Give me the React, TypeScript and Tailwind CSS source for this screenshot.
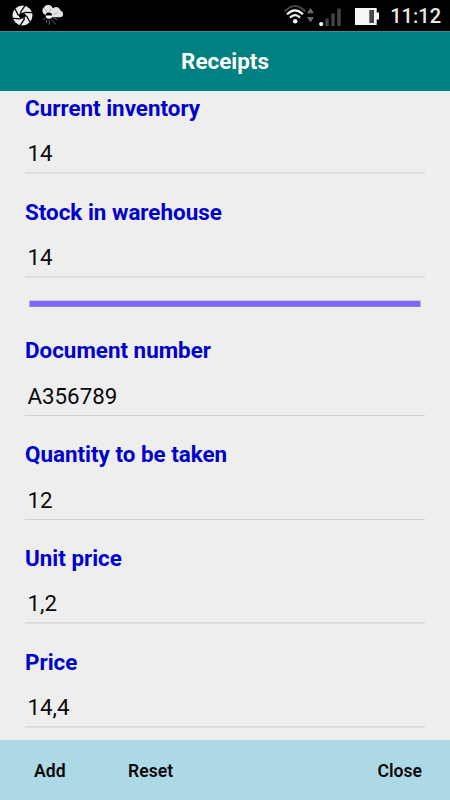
type FieldProps = { label: string; value: string; gap?: string; rule: string };

function Field({ label, value, gap = 'mt-[11px]', rule }: FieldProps) {
  return (
    <div className="flex h-[83px] shrink-0 flex-col">
      <div className="h-[34px] text-[22.4px] leading-[34px] font-bold whitespace-nowrap text-[#0000cd]">{label}</div>
      <div className={`h-[34px] pl-[2.500px] text-[22.3px] leading-[34px] whitespace-nowrap text-[#0a0a0a] ${gap}`}>{value}</div>
      <div className={`mt-auto shrink-0 ${rule}`} />
    </div>
  );
}

const soft = 'h-[2px] bg-[#e1e1e1] border-t border-[#d9d9d9]';
const crisp = 'h-px bg-[#d0d0d0]';

function Shutter() {
  return (
    <svg className="ml-3 h-[21px] w-[21px]" viewBox="0 0 21 21">
      <circle cx="10.5" cy="10.5" r="10" fill="#ececec" />
      <path d="M8.300 7.800l4-.2 2 3-1.900 2.900-3.900.2-2-3z" fill="#000" />
      <path d="M8.300 7.500L13.200 .3M12.500 7.300L20 7.700M14.500 10.700L18 17.200M12.700 13.700L8 20.700M8.500 13.900L1 13.400M6.500 10.600L3 3.700" stroke="#000" strokeWidth="1.300" />
    </svg>
  );
}

function Weather() {
  return (
    <svg className="ml-[9px] h-[22px] w-[22px]" viewBox="0 0 22 22">
      <path d="M3 10A4.700 4.700 0 0 1 2 2.200 4.900 4.900 0 0 1 10.800 3.200 4.800 4.800 0 0 1 18.600 5.800 3.300 3.300 0 0 1 18 12.300H10.500z" fill="#e4e4e4" />
      <path d="M3 4l2.500 3.500M8.600 3.500l-.6 3.500M16 7.500l-4.500 2" stroke="#999" strokeWidth=".7" />
      <circle cx="6.800" cy="10.700" r="3.300" fill="#000" />
      <path d="M3.700 10.500h6.600a3.300 3.300 0 0 1-6.600 0z" fill="#fff" />
      <path d="M3.300 13l-2 1.500M5 15l-1 3M7.300 15v4.800M9.300 14.500l4.500 5M10.800 12.800l5 2" stroke="#777" strokeWidth=".8" />
    </svg>
  );
}

function Signals() {
  return (
    <svg className="mr-[9px] ml-auto h-[26px] w-[97px] shrink-0" viewBox="284 3 97 26">
      <g fill="none" strokeWidth="2.200">
        <path d="M284.800 11.500Q295 .5 305.200 11.500" stroke="#444" />
        <path d="M287 14.300Q295 6.500 303 14.300" stroke="#f2f2f2" />
        <path d="M290 17.600Q295 12.800 300 17.600" stroke="#f2f2f2" />
      </g>
      <circle cx="295.200" cy="21.300" r="2.300" fill="#f2f2f2" />
      <path d="M307 13.300l3.500-5.300 3.500 5.300zM307 17l3.500 5.500 3.500-5.500z" fill="#6b6b6b" />
      <circle cx="321.200" cy="24.100" r="2.100" fill="#fff" />
      <path d="M325.300 18.500h3.400V26h-3.400zM331.300 13.500h3.400V26h-3.400zM337.300 8.500h3.400V26h-3.400z" fill="#454545" />
      <path d="M355 8h21.700v4.500h2.300v7h-2.300V25H355z" fill="#f6f6f6" />
      <path d="M369.300 10h4.700v13h-4.700z" fill="#484848" />
    </svg>
  );
}

export default function App() {
  return (
    <div className="flex h-[800px] w-[450px] flex-col overflow-hidden bg-[#eeeeee] font-[Roboto,sans-serif]">
      <div className="flex h-[31px] shrink-0 items-center bg-black">
        <Shutter />
        <Weather />
        <Signals />
        <div className="mr-[9px] w-[51px] pt-px text-right text-[20px] leading-[32px] font-medium whitespace-nowrap text-[#e8e8e8]">11:12</div>
      </div>
      <header className="flex h-[60px] shrink-0 items-center justify-center border-t border-[#3f8f8f] bg-[#008080] pt-px text-[22.4px] font-bold text-white">
        Receipts
      </header>
      <main className="flex min-h-0 flex-1 flex-col overflow-hidden px-[25px]">
        <Field label="Current inventory" value="14" rule={soft} />
        <div className="h-[21px] shrink-0" />
        <Field label="Stock in warehouse" value="14" rule={soft} />
        <div className="mt-[22px] ml-[4px] h-[7px] w-[392px] shrink-0 border border-t-[#cfc9ef] border-r-[#b9b0f0] border-b-[#8c7aee] border-l-[#b9b0f0] bg-[#7b68ee]" />
        <div className="h-[26px] shrink-0" />
        <Field label="Document number" value="A356789" gap="mt-[12px]" rule={crisp} />
        <div className="h-[21px] shrink-0" />
        <Field label="Quantity to be taken" value="12" gap="mt-[12px]" rule={crisp} />
        <div className="h-[21px] shrink-0" />
        <Field label="Unit price" value="1,2" rule={soft} />
        <div className="h-[21px] shrink-0" />
        <Field label="Price" value="14,4" rule={soft} />
      </main>
      <footer className="flex h-[60px] shrink-0 items-center bg-[#add8e6] pt-[2px] text-[17.6px] font-semibold text-[#0a0a0a]">
        <div className="ml-[34px] w-[94px]">Add</div>
        <div>Reset</div>
        <div className="mr-[28px] ml-auto">Close</div>
      </footer>
    </div>
  );
}
